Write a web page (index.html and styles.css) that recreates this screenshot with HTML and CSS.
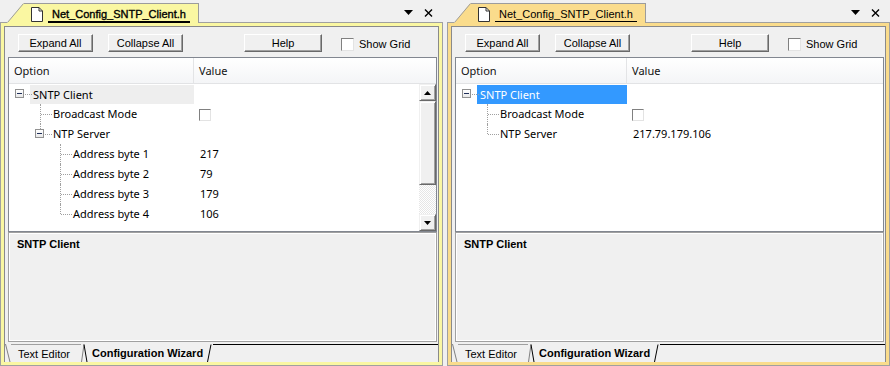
FILE: index.html
```html
<!DOCTYPE html>
<html lang="en">

<head>
    <meta charset="UTF-8">
    <title>Configuration Wizard</title>
    <link rel="stylesheet" href="styles.css">
</head>

<body>
    <div class="panes">
        <!-- Left editor pane (focused) -->
        <section class="pane pane-a">
            <div class="doc-bar">
                <div class="bar-edge"></div>
                <svg class="tab-slant" width="17" height="20" viewBox="0 0 17 20">
                    <polygon points="0,20 16,0.5 17,0.5 17,20" class="slant-fill" />
                    <line x1="0.5" y1="19.5" x2="16.5" y2="0.5" stroke="#9c9c9c" />
                </svg>
                <div class="doc-tab">
                    <svg class="doc-icon" width="12" height="15" viewBox="0 0 12 15">
                        <path d="M0.5 0.5 H8 L11.5 4 V14.5 H0.5 Z" fill="#fff" stroke="#333" />
                        <path d="M8 0.5 V4 H11.5" fill="none" stroke="#333" />
                    </svg>
                    <span class="doc-name">Net_Config_SNTP_Client.h</span>
                </div>
                <div class="bar-rest">
                    <svg width="9" height="5" viewBox="0 0 9 5"><polygon points="0,0 9,0 4.5,5" fill="#000" /></svg>
                    <svg width="9" height="8" viewBox="0 0 9 8"><path d="M1 0.5 L8 7.5 M8 0.5 L1 7.5" stroke="#000" stroke-width="1.4" /></svg>
                </div>
            </div>

            <div class="frame">
                <div class="frame-body">
                    <div class="toolbar">
                        <button class="btn">Expand All</button>
                        <button class="btn btn-collapse">Collapse All</button>
                        <button class="btn btn-help">Help</button>
                        <label class="grid-toggle"><span class="check"></span>Show Grid</label>
                    </div>

                    <div class="tree">
                        <div class="tree-head">
                            <div class="head-opt">Option</div>
                            <div class="head-val">Value</div>
                        </div>
                        <div class="tree-main">
                            <div class="rows">
                                <div class="row">
                                    <div class="opt"><span class="cell box"><i class="exp"></i></span><span class="label sel-gray">SNTP Client</span></div>
                                    <div class="val"></div>
                                </div>
                                <div class="row">
                                    <div class="opt"><span class="cell"></span><span class="cell tee"></span><span class="label">Broadcast Mode</span></div>
                                    <div class="val"><span class="check small"></span></div>
                                </div>
                                <div class="row">
                                    <div class="opt"><span class="cell"></span><span class="cell box up"><i class="exp"></i></span><span class="label">NTP Server</span></div>
                                    <div class="val"></div>
                                </div>
                                <div class="row">
                                    <div class="opt"><span class="cell"></span><span class="cell"></span><span class="cell tee"></span><span class="label">Address byte 1</span></div>
                                    <div class="val">217</div>
                                </div>
                                <div class="row">
                                    <div class="opt"><span class="cell"></span><span class="cell"></span><span class="cell tee"></span><span class="label">Address byte 2</span></div>
                                    <div class="val">79</div>
                                </div>
                                <div class="row">
                                    <div class="opt"><span class="cell"></span><span class="cell"></span><span class="cell tee"></span><span class="label">Address byte 3</span></div>
                                    <div class="val">179</div>
                                </div>
                                <div class="row">
                                    <div class="opt"><span class="cell"></span><span class="cell"></span><span class="cell ell"></span><span class="label">Address byte 4</span></div>
                                    <div class="val">106</div>
                                </div>
                            </div>
                            <div class="scrollbar">
                                <div class="sb-btn"><svg width="7" height="4" viewBox="0 0 7 4"><polygon points="0,4 7,4 3.5,0" fill="#000" /></svg></div>
                                <div class="sb-thumb"></div>
                                <div class="sb-track"></div>
                                <div class="sb-btn"><svg width="7" height="4" viewBox="0 0 7 4"><polygon points="0,0 7,0 3.5,4" fill="#000" /></svg></div>
                            </div>
                        </div>
                    </div>

                    <div class="desc">SNTP Client</div>

                    <div class="sheet-tabs">
                        <svg width="6" height="20" viewBox="0 0 6 20"><line x1="0.5" y1="2" x2="5" y2="20" stroke="#808080" /></svg>
                        <span class="sheet off">Text Editor</span>
                        <svg width="8" height="20" viewBox="0 0 8 20">
                            <line x1="0.5" y1="20" x2="3" y2="2.5" stroke="#808080" />
                            <line x1="3" y1="2.5" x2="6" y2="20" stroke="#000" />
                        </svg>
                        <span class="sheet on">Configuration Wizard</span>
                        <svg width="6" height="20" viewBox="0 0 6 20"><line x1="0.5" y1="20" x2="4" y2="2.5" stroke="#000" /></svg>
                        <span class="sheet-fill"></span>
                    </div>
                </div>
            </div>
        </section>

        <!-- Right editor pane -->
        <section class="pane pane-b">
            <div class="doc-bar">
                <div class="bar-edge"></div>
                <svg class="tab-slant" width="17" height="20" viewBox="0 0 17 20">
                    <polygon points="0,20 16,0.5 17,0.5 17,20" class="slant-fill" />
                    <line x1="0.5" y1="19.5" x2="16.5" y2="0.5" stroke="#9c9c9c" />
                </svg>
                <div class="doc-tab">
                    <svg class="doc-icon" width="12" height="15" viewBox="0 0 12 15">
                        <path d="M0.5 0.5 H8 L11.5 4 V14.5 H0.5 Z" fill="#fff" stroke="#333" />
                        <path d="M8 0.5 V4 H11.5" fill="none" stroke="#333" />
                    </svg>
                    <span class="doc-name">Net_Config_SNTP_Client.h</span>
                </div>
                <div class="bar-rest">
                    <svg width="9" height="5" viewBox="0 0 9 5"><polygon points="0,0 9,0 4.5,5" fill="#000" /></svg>
                    <svg width="9" height="8" viewBox="0 0 9 8"><path d="M1 0.5 L8 7.5 M8 0.5 L1 7.5" stroke="#000" stroke-width="1.4" /></svg>
                </div>
            </div>

            <div class="frame">
                <div class="frame-body">
                    <div class="toolbar">
                        <button class="btn">Expand All</button>
                        <button class="btn btn-collapse">Collapse All</button>
                        <button class="btn btn-help">Help</button>
                        <label class="grid-toggle"><span class="check"></span>Show Grid</label>
                    </div>

                    <div class="tree">
                        <div class="tree-head">
                            <div class="head-opt">Option</div>
                            <div class="head-val">Value</div>
                        </div>
                        <div class="tree-main">
                            <div class="rows">
                                <div class="row">
                                    <div class="opt"><span class="cell box"><i class="exp"></i></span><span class="label sel-blue">SNTP Client</span></div>
                                    <div class="val"></div>
                                </div>
                                <div class="row">
                                    <div class="opt"><span class="cell"></span><span class="cell tee"></span><span class="label">Broadcast Mode</span></div>
                                    <div class="val"><span class="check small"></span></div>
                                </div>
                                <div class="row">
                                    <div class="opt"><span class="cell"></span><span class="cell ell"></span><span class="label">NTP Server</span></div>
                                    <div class="val">217.79.179.106</div>
                                </div>
                            </div>
                        </div>
                    </div>

                    <div class="desc">SNTP Client</div>

                    <div class="sheet-tabs">
                        <svg width="6" height="20" viewBox="0 0 6 20"><line x1="0.5" y1="2" x2="5" y2="20" stroke="#808080" /></svg>
                        <span class="sheet off">Text Editor</span>
                        <svg width="8" height="20" viewBox="0 0 8 20">
                            <line x1="0.5" y1="20" x2="3" y2="2.5" stroke="#808080" />
                            <line x1="3" y1="2.5" x2="6" y2="20" stroke="#000" />
                        </svg>
                        <span class="sheet on">Configuration Wizard</span>
                        <svg width="6" height="20" viewBox="0 0 6 20"><line x1="0.5" y1="20" x2="4" y2="2.5" stroke="#000" /></svg>
                        <span class="sheet-fill"></span>
                    </div>
                </div>
            </div>
        </section>
    </div>
</body>

</html>
```

FILE: styles.css
```css
/* Basic Reset */
* {
    margin: 0;
    padding: 0;
    box-sizing: border-box;
}

body {
    font-family: "Liberation Sans", Arial, sans-serif;
    font-size: 11px;
    color: #000;
    background-color: #f0f0f0;
    width: 890px;
    height: 366px;
    overflow: hidden;
}

/* Two editor panes side by side */
.panes {
    display: flex;
    gap: 4px;
    height: 366px;
}

.pane {
    --tab: #faf7a2;
    --col: 184px;
    width: 443px;
    display: flex;
    flex-direction: column;
}

.pane-b {
    --tab: #fadc8c;
    --col: 170px;
}

/* Document tab bar */
.doc-bar {
    height: 23px;
    display: flex;
    align-items: flex-end;
}

.bar-edge {
    width: 7px;
    height: 100%;
    border-bottom: 1px solid #a0a0a0;
}

.tab-slant {
    display: block;
    flex: none;
}

.slant-fill {
    fill: var(--tab);
}

.doc-tab {
    height: 20px;
    width: 175px;
    background-color: var(--tab);
    border-top: 1px solid #9c9c9c;
    border-right: 1px solid #9c9c9c;
    display: flex;
    align-items: flex-end;
    padding-left: 7px;
}

.doc-icon {
    display: block;
    align-self: center;
    margin-top: 1px;
    margin-right: 5px;
}

.doc-name {
    line-height: 13px;
    padding: 0 4px 0 4px;
    border-bottom: 1px solid #000;
    margin-bottom: 1px;
}

.pane-a .doc-name {
    border-bottom-width: 2px;
    margin-bottom: 0;
    -webkit-text-stroke: 0.35px #000;
}

.bar-rest {
    flex: 1;
    height: 100%;
    border-bottom: 1px solid #a0a0a0;
    display: flex;
    justify-content: flex-end;
    align-items: flex-start;
    gap: 11px;
    padding: 9px 10px 0 0;
}

.bar-rest svg {
    display: block;
}

.bar-rest svg:first-child {
    margin-top: 1px;
}

/* Coloured frame around the wizard */
.frame {
    flex: 1;
    display: flex;
    background-color: var(--tab);
    border: 1px solid #a0a0a0;
    border-top: none;
    padding: 3px;
}

.frame-body {
    flex: 1;
    display: flex;
    flex-direction: column;
    background-color: #f0f0f0;
    border: 1px solid #8a8a8a;
    border-bottom: none;
    padding: 0 1px 0 3px;
}

/* Toolbar with buttons */
.toolbar {
    height: 30px;
    display: flex;
    align-items: flex-start;
    padding: 7px 0 0 10px;
}

.btn {
    font-family: "Liberation Sans", Arial, sans-serif;
    font-size: 11px;
    width: 75px;
    height: 18px;
    background-color: #f0f0f0;
    border: 1px solid;
    border-color: #fff #696969 #696969 #fff;
    box-shadow: inset -1px -1px 0 #a0a0a0;
    color: #000;
    line-height: 14px;
}

.btn-collapse {
    margin-left: 15px;
}

.btn-help {
    width: 78px;
    margin-left: 61px;
}

.grid-toggle {
    display: flex;
    align-items: center;
    margin-left: 19px;
    margin-top: 4px;
    gap: 5px;
    line-height: 13px;
}

.check {
    display: inline-block;
    width: 13px;
    height: 13px;
    background-color: #fff;
    border: 1px solid;
    border-color: #808080 #e3e3e3 #e3e3e3 #808080;
}

.check.small {
    width: 12px;
    height: 12px;
    margin-left: -1px;
    margin-top: 1px;
}

/* Tree list */
.tree {
    height: 175px;
    background-color: #fff;
    border: 1px solid #828790;
    display: flex;
    flex-direction: column;
    font-family: "Noto Sans", "Liberation Sans", sans-serif;
    font-size: 11px;
}

.tree-head {
    height: 26px;
    display: flex;
    background: linear-gradient(#ffffff, #f4f5f7);
    border-bottom: 1px solid #e2e3e5;
    line-height: 26px;
    color: #111;
}

.head-opt {
    width: calc(var(--col) + 1px);
    padding-left: 5px;
    border-right: 1px solid #e3e4e6;
}

.head-val {
    padding-left: 5px;
}

.tree-main {
    flex: 1;
    display: flex;
}

.rows {
    flex: 1;
    padding-left: 1px;
}

.row {
    height: 20px;
    display: flex;
    line-height: 20px;
}

.opt {
    width: var(--col);
    display: flex;
}

.val {
    padding-left: 6px;
    display: flex;
    align-items: center;
}

.label {
    padding-left: 3px;
    white-space: nowrap;
}

.sel-gray {
    flex: 1;
    background-color: #eeeeee;
    margin-top: 1px;
    line-height: 19px;
}

.sel-blue {
    flex: 1;
    background-color: #3399ff;
    color: #fff;
    margin-top: 1px;
    line-height: 19px;
}

/* Dotted connector lines */
.cell {
    width: 20px;
    height: 20px;
    flex: none;
    position: relative;
}

.cell.tee::before,
.cell.ell::before,
.cell.up::after {
    content: "";
    position: absolute;
    left: 10px;
    top: 0;
    height: 20px;
    border-left: 1px dotted #a0a0a0;
}

.cell.ell::before {
    height: 10px;
}

.cell.up::after {
    height: 5px;
}

.cell.tee::after,
.cell.ell::after,
.cell.box::before {
    content: "";
    position: absolute;
    left: 11px;
    right: -2px;
    top: 10px;
    border-top: 1px dotted #a0a0a0;
}

.cell.box::before {
    left: 15px;
}

.exp {
    position: absolute;
    left: 5px;
    top: 5px;
    width: 9px;
    height: 9px;
    border: 1px solid #919191;
    background: linear-gradient(#fff, #e8e8e8);
}

.exp::after {
    content: "";
    position: absolute;
    left: 1px;
    top: 3px;
    width: 5px;
    height: 1px;
    background-color: #1f2f5a;
}

/* Scrollbar */
.scrollbar {
    width: 17px;
    display: flex;
    flex-direction: column;
}

.sb-btn {
    height: 17px;
    display: flex;
    align-items: center;
    justify-content: center;
}

.sb-btn,
.sb-thumb {
    background-color: #f0f0f0;
    border: 1px solid;
    border-color: #f0f0f0 #696969 #696969 #f0f0f0;
    box-shadow: inset 1px 1px 0 #fff, inset -1px -1px 0 #a0a0a0;
}

.sb-btn svg {
    display: block;
}

.sb-thumb {
    height: 84px;
}

.sb-track {
    flex: 1;
    background-image: repeating-conic-gradient(#ffffff 0 25%, #e6e6e6 0 50%);
    background-size: 2px 2px;
}

/* Description area */
.desc {
    height: 110px;
    border: 1px solid #a0a0a0;
    box-shadow: inset 1px 1px 0 #fff, inset -1px -1px 0 #fff;
    padding: 4px 8px;
    font-weight: bold;
    line-height: 14px;
}

/* Sheet tabs at the bottom */
.sheet-tabs {
    height: 20px;
    display: flex;
    margin-left: -3px;
    margin-right: -1px;
}

.sheet-tabs svg {
    display: block;
    flex: none;
}

.sheet {
    white-space: nowrap;
}

.sheet.off {
    width: 70px;
    margin-top: 2px;
    border-top: 1px solid #a0a0a0;
    padding: 1px 0 0 7px;
    line-height: 16px;
}

.sheet.on {
    font-weight: bold;
    padding: 3px 4px 0 3px;
    line-height: 16px;
}

.sheet-fill {
    flex: 1;
    margin-top: 2px;
    border-top: 1px solid #000;
}
```
